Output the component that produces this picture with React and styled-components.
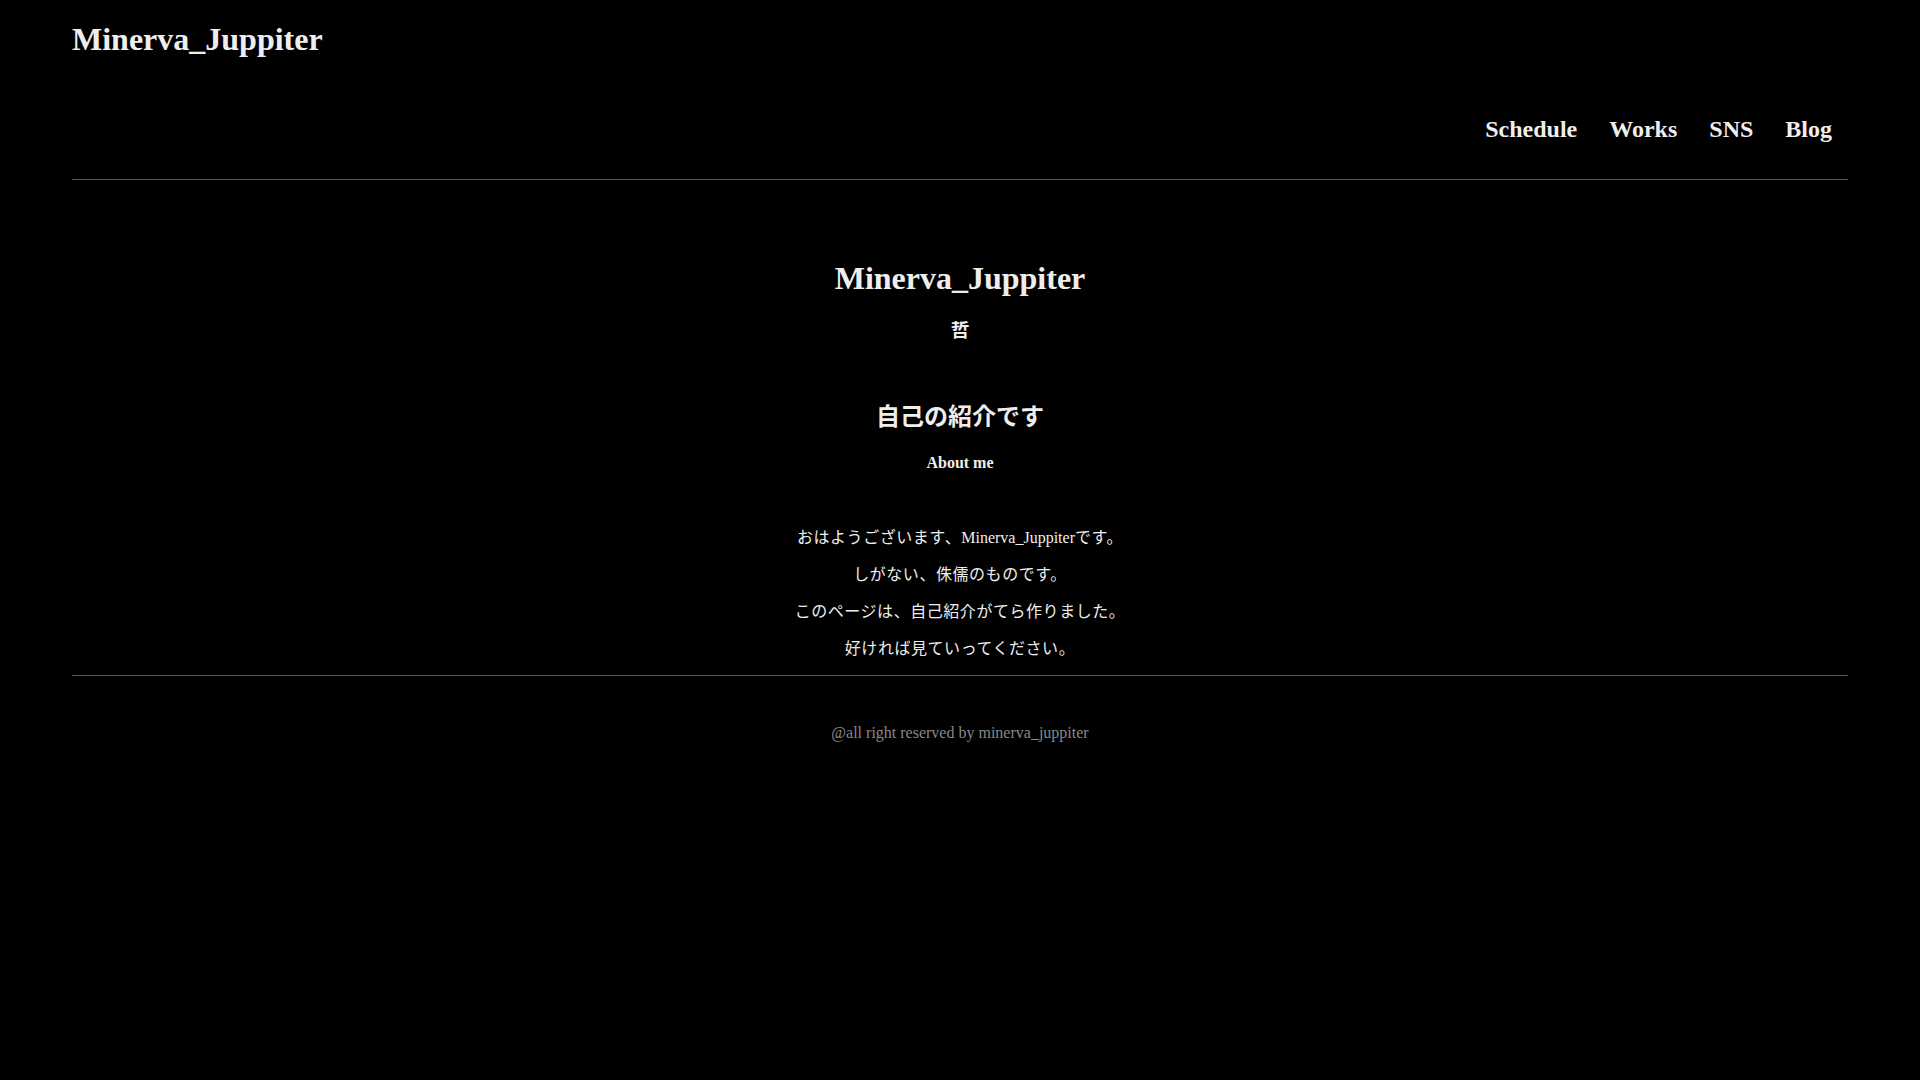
import React from "react";
import styled, { createGlobalStyle } from "styled-components";

const Global = createGlobalStyle`
  html, body { margin: 0; padding: 0; background: #000; }
  body {
    color: #eeeeee;
    font-family: "Liberation Serif", "Noto Sans CJK JP", serif;
  }
`;

const Page = styled.div`
  padding: 0 72px;
  min-height: 1080px;
  box-sizing: border-box;
`;

const Header = styled.header`
  border-bottom: 1px solid #555;
`;

const Logo = styled.h1`
  margin: 21px 0 0;
  font-size: 32px;
  line-height: 37px;
  font-weight: 700;
`;

const Nav = styled.nav`
  display: flex;
  justify-content: flex-end;
  margin-top: 57px;
  padding-bottom: 36px;
`;

const NavItem = styled.a`
  padding: 0 16px;
  font-size: 24px;
  line-height: 28px;
  font-weight: 700;
  color: #eeeeee;
  text-decoration: none;
`;

const Main = styled.main`
  display: flex;
  flex-direction: column;
  align-items: center;
  text-align: center;
  border-bottom: 1px solid #555;
  padding-top: 80px;
  padding-bottom: 0;
`;

const HeroTitle = styled.h2`
  margin: 0;
  font-size: 32px;
  line-height: 37px;
  font-weight: 700;
`;

const Kanji = styled.h3`
  margin: 22px 0 0;
  font-size: 18.72px;
  line-height: 24px;
  font-weight: 700;
`;

const SectionTitle = styled.h2`
  margin: 60px 0 0;
  font-size: 24px;
  line-height: 28px;
  font-weight: 700;
`;

const SectionSub = styled.h4`
  margin: 22px 0 0;
  font-size: 16px;
  line-height: 19px;
  font-weight: 700;
`;

const Body = styled.div`
  margin-top: 39px;
`;

const Para = styled.p`
  margin: 16px 0;
  font-size: 16px;
  line-height: 21px;
  letter-spacing: 0.55px;
`;

const Latin = styled.span`
  letter-spacing: 0;
`;

const Footer = styled.footer`
  text-align: center;
  padding-top: 47px;
  font-size: 16px;
  line-height: 19px;
  color: #888;
`;

export default function App() {
  return (
    <>
      <Global />
      <Page>
        <Header>
          <Logo>Minerva_Juppiter</Logo>
          <Nav>
            {["Schedule", "Works", "SNS", "Blog"].map((n) => (
              <NavItem key={n} href="#">
                {n}
              </NavItem>
            ))}
          </Nav>
        </Header>
        <Main>
          <HeroTitle>Minerva_Juppiter</HeroTitle>
          <Kanji>哲</Kanji>
          <SectionTitle>自己の紹介です</SectionTitle>
          <SectionSub>About me</SectionSub>
          <Body>
            <Para>
              おはようございます、<Latin>Minerva_Juppiter</Latin>です。
            </Para>
            <Para>しがない、侏儒のものです。</Para>
            <Para>このページは、自己紹介がてら作りました。</Para>
            <Para>好ければ見ていってください。</Para>
          </Body>
        </Main>
        <Footer>@all right reserved by minerva_juppiter</Footer>
      </Page>
    </>
  );
}
